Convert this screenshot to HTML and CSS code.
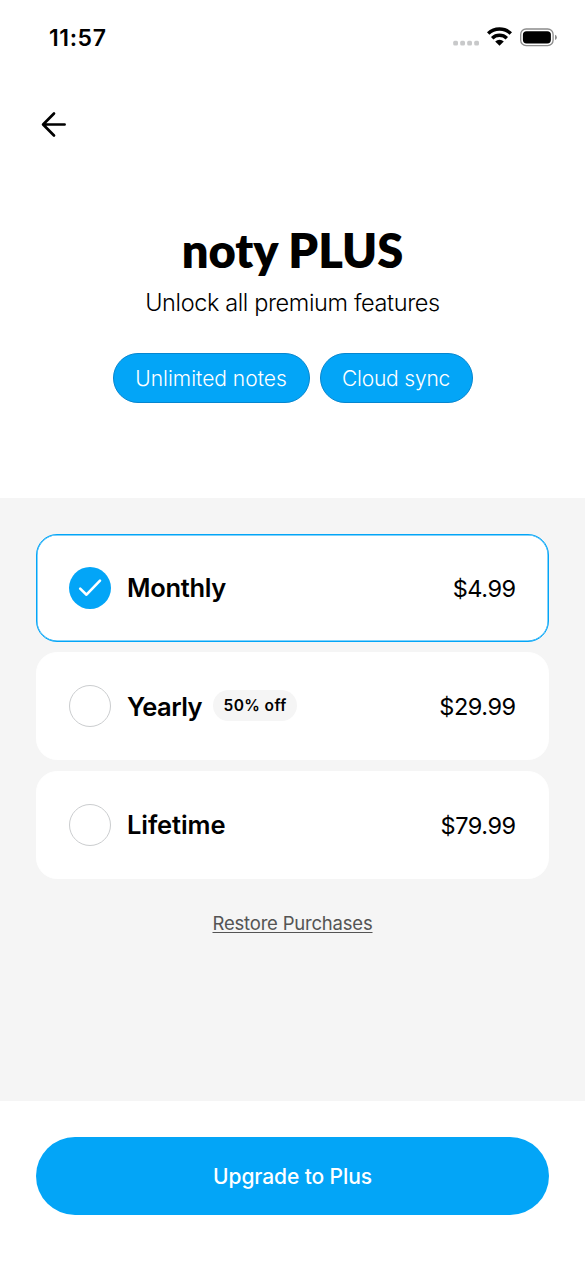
FILE: index.html
```html
<!DOCTYPE html>
<html lang="en">
<head>
<meta charset="utf-8">
<title>noty PLUS</title>
<link rel="stylesheet" href="styles.css">
</head>
<body>
<main class="screen">
  <header class="status">
    <span class="time">11:57</span>
    <svg class="status-icons" width="106" height="24" viewBox="0 0 106 24">
      <g fill="#c8c9ca"><rect x="1.2" y="15.8" width="4.8" height="4.6" rx="1.5"/><rect x="8.2" y="15.8" width="4.8" height="4.6" rx="1.5"/><rect x="15.2" y="15.8" width="4.8" height="4.6" rx="1.5"/><rect x="22.2" y="15.8" width="4.8" height="4.6" rx="1.5"/></g>
      <g fill="none" stroke="#000" stroke-width="3.5"><path d="M36.2 8.6a16.4 16.4 0 0 1 22.6 0"/><path d="M40.2 13.2a10.5 10.5 0 0 1 14.6 0"/></g>
      <path d="M43.2 16.6a6.2 6.2 0 0 1 8.6 0l-4.3 4.2z"/>
      <rect x="68.7" y="4" width="32.4" height="16.6" rx="5.4" fill="#fff" stroke="#8c8c8c" stroke-width="1.3"/>
      <rect x="70.9" y="6.2" width="28" height="12.2" rx="3.6"/>
      <path d="M103 9.8q1.9.8 1.9 2.6t-1.9 2.6z" fill="#8c8c8c"/>
    </svg>
  </header>
  <nav class="nav">
    <svg width="28" height="28" viewBox="0 0 28 28" fill="none" stroke="#000" stroke-width="2.7" stroke-linecap="round" stroke-linejoin="round"><path d="M14 3.5 3.1 14.5 14 25.5M3.3 14.5H24.6"/></svg>
  </nav>
  <section class="hero">
    <h1 class="title">noty PLUS</h1>
    <p class="subtitle">Unlock all premium features</p>
    <div class="chips"><span class="chip chip-notes">Unlimited notes</span><span class="chip chip-sync">Cloud sync</span></div>
  </section>
  <section class="plans">
    <div class="plan selected">
      <svg class="radio" viewBox="0 0 42 42"><circle cx="21" cy="21" r="21" fill="#03a5f7"/><path d="m11.2 21.6 6.3 6.1L31 13.6" fill="none" stroke="#fff" stroke-width="2.6" stroke-linecap="round" stroke-linejoin="round"/></svg>
      <span class="name monthly">Monthly</span><span class="price">$4.99</span>
    </div>
    <div class="plan">
      <span class="radio empty"></span><span class="name yearly">Yearly</span><span class="badge">50% off</span><span class="price">$29.99</span>
    </div>
    <div class="plan">
      <span class="radio empty"></span><span class="name lifetime">Lifetime</span><span class="price">$79.99</span>
    </div>
    <a class="restore">Restore Purchases</a>
  </section>
  <footer class="footer"><button class="upgrade">Upgrade to Plus</button></footer>
</main>
</body>
</html>
```
FILE: styles.css
```css
* { box-sizing: border-box; margin: 0; }
body { background: #fff; color: #000; font-family: Inter, sans-serif; }
.screen { width: 585px; height: 1266px; display: flex; flex-direction: column; overflow: hidden; }
.status { height: 74px; padding: 0 27px 0 49px; display: flex; align-items: center; justify-content: space-between; }
.time { padding-top: 1px; font-size: 23px; font-weight: 600; letter-spacing: 0.6px; }
.status-icons { display: block; }
.nav { height: 100px; padding: 36px 0 0 40px; }
.nav svg { display: block; }
.hero { height: 323.5px; padding-top: 47px; display: flex; flex-direction: column; align-items: center; }
.title { height: 58px; font: 800 47px/58px Lato, sans-serif; white-space: nowrap; }
.subtitle { margin-top: 8px; font-size: 23.5px; line-height: 32px; font-weight: 300; letter-spacing: -0.38px; white-space: nowrap; }
.chips { display: flex; gap: 10px; margin-top: 34px; }
.chip { height: 50px; border: 1px solid #0686cf; border-radius: 25px; background: #03a5f7; color: #fff; font-size: 21px; font-weight: 300; line-height: 50px; text-align: center; white-space: nowrap; }
.chip-notes { width: 197px; }
.chip-sync { width: 153px; letter-spacing: -0.2px; }
.plans { height: 603.5px; padding: 36px 36px 0; background: #f5f5f5; display: flex; flex-direction: column; gap: 10.5px; }
.plan { height: 108px; flex: none; border: 1px solid #fff; border-radius: 21px; background: #fff; padding: 0 32px; display: flex; align-items: center; }
.plan.selected { border-color: #03a5f7; box-shadow: inset 0 0 0 0.5px #03a5f7; }
.radio { width: 42px; height: 42px; flex: none; }
.empty { border: 1.2px solid #cbcdcf; border-radius: 50%; }
.name { margin-left: 16px; font-size: 25.5px; font-weight: 600; }
.monthly { letter-spacing: -0.32px; }
.yearly { letter-spacing: -0.5px; }
.lifetime { letter-spacing: -0.1px; }
.badge { width: 84px; height: 31px; margin: 0 0 1px 11px; border-radius: 16px; background: #f5f5f5; font-size: 15.5px; line-height: 32px; font-weight: 600; letter-spacing: 0.4px; text-align: center; }
.price { margin-left: auto; padding: 1px 0.3px 0 0; font-size: 23.5px; letter-spacing: -0.45px; }
.restore { align-self: center; margin-top: 22px; color: #545454; font-size: 18.5px; line-height: 24px; letter-spacing: -0.2px; text-decoration: underline; text-decoration-thickness: 1px; text-underline-offset: 2px; text-decoration-skip-ink: none; }
.footer { flex: 1; padding: 36px 36px 0; }
.upgrade { display: block; width: 513px; height: 78px; border: 0; border-radius: 39px; background: #03a5f7; color: #fff; font: 500 21px Inter, sans-serif; letter-spacing: -0.1px; }
```
